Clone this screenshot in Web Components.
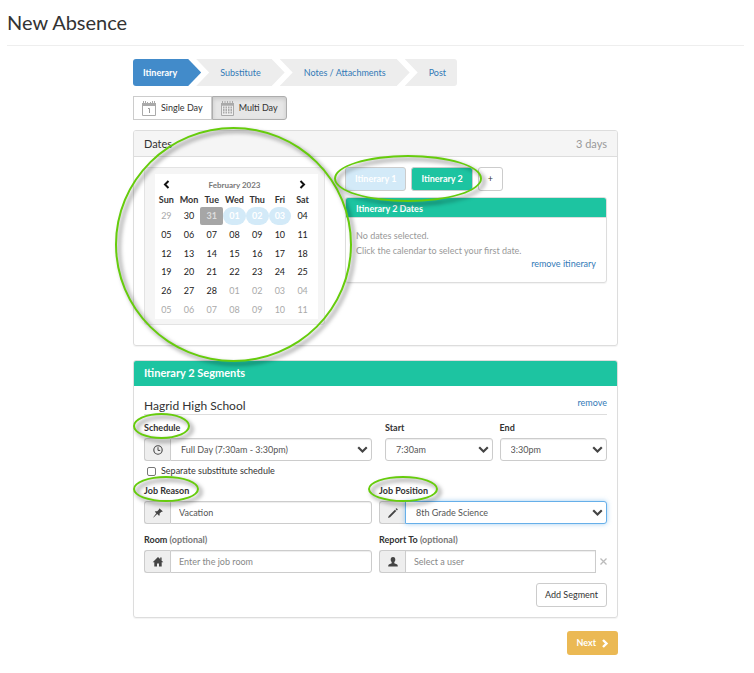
<!DOCTYPE html>
<html lang="en">
<head>
<meta charset="utf-8">
<title>New Absence</title>
<style>
body{margin:0;background:#fff;font:9px/14px Lato,sans-serif;color:#333;
--line:#ddd;--ctl:#ccc;--green:#1dc4a1;--link:#337ab7;--muted:#999}
</style>
</head>
<body>
<absence-page></absence-page>
<script>
const BASE = `*{box-sizing:border-box}button,input,select{font:inherit;color:inherit;margin:0}
a{color:var(--link);text-decoration:none}svg{display:block}`;
const define = (name, css, html) => customElements.define(name, class extends HTMLElement {
  constructor() {
    super();
    const t = document.createElement('template');
    t.innerHTML = `<style>${BASE}${css}</style>` + (typeof html === 'function' ? html(this) : html);
    this.attachShadow({mode: 'open'}).append(t.content.cloneNode(true));
  }
});

const ICONS = {
  clock: '<circle cx="6" cy="6" r="4.2" fill="none" stroke="#444" stroke-width="1.1"/><path d="M6 3.2V6.4H8.2" fill="none" stroke="#444" stroke-width="1"/>',
  pin: '<path d="M7.6 1.4 10.7 4.3 10 4.9 9.4 4.7 7.6 6.6 7.7 8.2 7 8.7 5.2 7 1.6 10.4 1.3 10.2 4.3 6.2 2.8 4.8 3.4 4.2 5.2 4.2 7 2.6 6.9 2z" fill="#444"/>',
  pencil: '<path d="M1 11 1.7 8.9 7.9 2.7 9.3 4.1 3.1 10.3zM8.5 2.1 9.1 1.5Q9.5 1.1 9.9 1.5L10.5 2.100Q10.900 2.500 10.500 2.900L9.900 3.500z" fill="#444"/>',
  home: '<path d="M6 1 11.3 6.3H9.7V10.6H7V7.6H5V10.6H2.3V6.3H.7zM8.2 1.6H9.6V4.4L8.2 3z" fill="#444"/>',
  user: '<path d="M6 .9C7.7.9 8.4 2 8.3 3.7 8.2 5 7.6 5.8 7.3 6.2V7.3L10.2 8.6Q10.8 8.9 10.8 10.6H1.2Q1.2 8.9 1.8 8.6L4.7 7.3V6.2C4.4 5.8 3.8 5 3.7 3.7 3.6 2 4.3.9 6 .9z" fill="#444"/>'
};

define('ring-mark', `:host{position:absolute;z-index:5;pointer-events:none;border:2px solid #66cc0c;border-radius:50%;filter:drop-shadow(3px 3px 2px rgba(0,0,0,.55))}`, '');

define('step-trail', `:host{display:block}
ol{display:flex;list-style:none;margin:0;padding:0}
li{background:#ededed;height:27px;line-height:27px;padding:0 24px;margin-left:-5px;
clip-path:polygon(0 0,calc(100% - 13px) 0,100% 50%,calc(100% - 13px) 100%,0 100%,13px 50%)}
li:first-child{margin:0;padding-left:10px;background:#428bca;border-radius:3px 0 0 3px;
clip-path:polygon(0 0,calc(100% - 13px) 0,100% 50%,calc(100% - 13px) 100%,0 100%)}
li:first-child a{color:#fff;font-weight:700}
li:last-child{padding-right:11px;border-radius:0 3px 3px 0;clip-path:polygon(0 0,100% 0,100% 100%,0 100%,13px 50%)}`,
`<ol><li><a href="#" aria-current="step">Itinerary</a></li><li><a href="#">Substitute</a></li><li><a href="#">Notes / Attachments</a></li><li><a href="#">Post</a></li></ol>`);

define('day-toggle', `:host{display:flex}
button{display:flex;align-items:center;gap:4px;height:24px;padding:0 8px 0 7px;border:1px solid var(--ctl);background:#fff}
button:first-child{border-radius:3px 0 0 3px;border-right:0}
button:last-child{border-radius:0 3px 3px 0;background:#e6e6e6;border-color:#adadad;box-shadow:inset 0 2px 4px rgba(0,0,0,.13)}`,
`<button type="button"><svg width="16" height="17" viewBox="0 0 16 17"><path d="M1.500 5.500V15.500H14.500V5.500" fill="none" stroke="#aaa"/><path d="M1 3H15V6H1z" fill="#aaa"/><path d="M2.500 3V1M4.500 3V1M6.500 3V2M9.500 3V2M11.500 3V1M13.500 3V1" stroke="#aaa"/><path d="M7 8.500H8.500V13" fill="none" stroke="#999"/></svg>Single Day</button><button type="button" aria-pressed="true"><svg width="15" height="17" viewBox="0 0 15 17"><path d="M1.500 5V15.500H13.500V5z" fill="#eee" stroke="#aaa"/><path d="M1 3H14V5.500H1z" fill="#aaa"/><path d="M2.500 3V1M5 3V1M7.500 3V1M10 3V1M12.500 3V1" stroke="#aaa"/><path d="M3 7.500H12M3 10H12M3 12.500H12" stroke="#aaa" stroke-width="2" stroke-dasharray="1.500 1"/></svg>Multi Day</button>`);

define('titled-panel', `:host{display:block;border:1px solid var(--line);border-radius:3px;box-shadow:0 1px 1px rgba(0,0,0,.05)}
header{display:flex;justify-content:space-between;padding:0 10px;height:26px;line-height:26px;font-size:11px;background:#f5f5f5;border-bottom:1px solid var(--line);border-radius:2px 2px 0 0}
:host([tone=green]) header{background:var(--green);color:#fff;font-weight:700;height:25px;line-height:24px;border-color:var(--green)}
:host([size=small]) header{font-size:9px;height:20px;line-height:21px;border-color:var(--line)}
.aside{color:var(--muted)}.body{padding:10px}`,
`<header><span><slot name="title"></slot></span><span class="aside"><slot name="aside"></slot></span></header><div class="body"><slot></slot></div>`);

const rows = ['29 30 31 01 02 03 04','05 06 07 08 09 10 11','12 13 14 15 16 17 18','19 20 21 22 23 24 25','26 27 28 01 02 03 04','05 06 07 08 09 10 11'];
define('month-calendar', `:host{display:block;position:relative;background:#f5f5f5;border:1px solid #e3e3e3;border-radius:3px;padding:6px 6px 5px 10px}
.in{background:#fff;padding:2px 4px 0 0}
.nav{display:flex;justify-content:space-between;align-items:center;height:17px;padding:0 8px;color:#777;font-weight:700;font-size:8px}
.nav button{border:0;background:none;padding:0}
table{width:100%;height:126px;border-collapse:collapse;table-layout:fixed;line-height:18px;text-align:center;color:#222}
th,td{padding:0}th{height:14px;line-height:14px;font-weight:700;color:#333}
td.mute{color:#aaa}td.now span{display:block;background:#a6a6a6;color:#ddd;font-weight:700;border-radius:2px}
td.pick span{display:block;border-radius:9px;background:#d3eaf8;color:#fff;font-weight:700}
ring-mark{left:-30px;right:-28px;top:-41px;bottom:-38px}`,
`<div class="in"><div class="nav"><button type="button" aria-label="Previous month"><svg width="7" height="9" viewBox="0 0 7 9"><path d="M5.500 1 2 4.500 5.500 8" fill="none" stroke="#111" stroke-width="2"/></svg></button><span>February 2023</span><button type="button" aria-label="Next month"><svg width="7" height="9" viewBox="0 0 7 9"><path d="M1.500 1 5 4.500 1.500 8" fill="none" stroke="#111" stroke-width="2"/></svg></button></div>
<table><thead><tr>${'Sun Mon Tue Wed Thu Fri Sat'.split(' ').map(d => `<th>${d}</th>`).join('')}</tr></thead><tbody>${rows.map((r, i) => '<tr>' + r.split(' ').map((d, j) => {
  const k = i * 7 + j;
  return `<td class="${k === 2 ? 'now' : k > 2 && k < 6 ? 'pick' : k === 0 || k > 30 ? 'mute' : ''}"><span>${d}</span></td>`;
}).join('') + '</tr>').join('')}</tbody></table></div><ring-mark></ring-mark>`);

define('itinerary-tabs', `:host{display:flex;gap:5px;position:relative}
button{height:24px;padding:0 9px;border:1px solid var(--ctl);border-radius:3px;background:#fff}
.one,.two{color:#fff;font-weight:700}.one{background:#d3eaf8}.two{background:var(--green)}
ring-mark{left:-11px;top:-12px;width:148px;height:47px}`,
`<button type="button" class="one">Itinerary 1</button><button type="button" class="two">Itinerary 2</button><button type="button" aria-label="Add itinerary">+</button><ring-mark></ring-mark>`);

define('form-field', `:host{display:block;flex:1;min-width:0}
label{display:block;width:fit-content;position:relative;font-weight:700;line-height:14px;margin-bottom:3px}
label i{font-style:normal;color:#777}
.row{display:flex;align-items:center}
.icon{display:grid;place-items:center;width:26px;height:23px;background:#eee;border:1px solid var(--ctl);border-right:0;border-radius:3px 0 0 3px}
.box{position:relative;flex:1;min-width:0}
input,select{display:block;width:100%;height:23px;padding:0 10px;border:1px solid var(--ctl);border-radius:3px;background:#fff;color:#555;appearance:none;outline:0;box-shadow:inset 0 1px 1px rgba(0,0,0,.075)}
input{padding:0 8px}
.icon+.box>*{border-radius:0 3px 3px 0}
input::placeholder{color:#888;opacity:1}
.box svg{position:absolute;right:4px;top:8px;border-radius:0;pointer-events:none}
:host([active]) select{border-color:#66afe9;box-shadow:0 0 5px rgba(102,175,233,.6)}
.clear{border:0;background:none;padding:0 0 0 4px}
:host([clearable]) .box input{border-radius:0}
ring-mark{left:-11px;right:-10px;top:-8px;bottom:-4px}`,
el => {
  const a = n => el.getAttribute(n);
  return `<label for="c">${a('label')}${el.hasAttribute('optional') ? ' <i>(optional)</i>' : ''}${el.hasAttribute('ring') ? '<ring-mark></ring-mark>' : ''}</label>
<div class="row">${a('icon') ? `<span class="icon"><svg width="12" height="12" viewBox="0 0 12 12">${ICONS[a('icon')]}</svg></span>` : ''}<div class="box">${a('choice')
  ? `<select id="c"><option>${a('choice')}</option></select><svg width="11" height="8" viewBox="0 0 11 8"><path d="M1.200 1.300 5.500 5.500 9.800 1.300" fill="none" stroke="#444" stroke-width="2.200"/></svg>`
  : `<input id="c" type="text" value="${a('value') || ''}" placeholder="${a('hint') || ''}">`}</div>${el.hasAttribute('clearable') ? '<button type="button" class="clear" aria-label="Clear"><svg width="7" height="7" viewBox="0 0 7 7"><path d="M.5.5 6.500 6.500M6.500.5.5 6.500" stroke="#bbb" stroke-width="1.300"/></svg></button>' : ''}</div>`;
});

define('segment-form', `:host{display:block}
.head{display:flex;justify-content:space-between;align-items:flex-end;border-bottom:1px solid var(--line);height:19px;margin-bottom:6px}
h2{margin:0;font:400 12px/17px Lato,sans-serif}.head a{line-height:22px}
.pair{display:grid;grid-template-columns:minmax(0,1fr) minmax(0,1fr);gap:7px}
.times{display:flex;gap:7px;padding-left:6px}
.check{display:flex;align-items:center;gap:5px;height:14px;margin:3px 0 6px 3px}
.check input{appearance:none;width:9px;height:9px;border:1px solid #777;border-radius:2px;background:#fff}
.pair+.pair{margin-top:9px}
.foot{display:flex;justify-content:flex-end;margin-top:10px}
.foot button{height:24px;padding:0 8px;border:1px solid var(--ctl);border-radius:3px;background:#fff}`,
`<div class="head"><h2>Hagrid High School</h2><a href="#">remove</a></div>
<div class="pair"><form-field label="Schedule" ring icon="clock" choice="Full Day (7:30am - 3:30pm)"></form-field><div class="times"><form-field label="Start" choice="7:30am"></form-field><form-field label="End" choice="3:30pm"></form-field></div></div>
<label class="check"><input type="checkbox">Separate substitute schedule</label>
<div class="pair"><form-field label="Job Reason" ring icon="pin" value="Vacation"></form-field><form-field label="Job Position" ring active icon="pencil" choice="8th Grade Science"></form-field></div>
<div class="pair"><form-field label="Room" optional icon="home" hint="Enter the job room"></form-field><form-field label="Report To" optional clearable icon="user" hint="Select a user"></form-field></div>
<div class="foot"><button type="button">Add Segment</button></div>`);

define('absence-page', `:host{display:block;padding:8px 10px 19px 7px}
h1{margin:0 0 13px;padding-bottom:9px;border-bottom:1px solid #eee;font:400 20px/28px Lato,sans-serif}
main{max-width:485px;margin:0 auto}
day-toggle{margin:10px 0}
.dates{display:grid;grid-template-columns:181px 1fr;gap:20px;align-items:start;padding-bottom:10px}
itinerary-tabs{margin-bottom:6px}
p{margin:0;color:var(--muted);line-height:15px}.rm{text-align:right;line-height:12px;padding-bottom:2px}
.seg{margin-top:14px}
.next{display:flex;justify-content:flex-end;margin-top:13px}
.next button{display:flex;align-items:center;gap:5px;height:24px;padding:0 9px;border:0;border-radius:3px;background:#ebb954;color:#fff;font-weight:700}`,
`<h1>New Absence</h1><main><step-trail></step-trail><day-toggle></day-toggle>
<titled-panel><span slot="title">Dates</span><span slot="aside">3 days</span><div class="dates"><month-calendar></month-calendar><div><itinerary-tabs></itinerary-tabs><titled-panel tone="green" size="small"><span slot="title">Itinerary 2 Dates</span><p>No dates selected.</p><p>Click the calendar to select your first date.</p><div class="rm"><a href="#">remove itinerary</a></div></titled-panel></div></div></titled-panel>
<titled-panel class="seg" tone="green"><span slot="title">Itinerary 2 Segments</span><segment-form></segment-form></titled-panel>
<div class="next"><button type="button">Next<svg width="8" height="9" viewBox="0 0 8 9"><path d="M2 1 5.500 4.500 2 8" fill="none" stroke="#fff" stroke-width="2.400"/></svg></button></div></main>`);
</script>
</body>
</html>
